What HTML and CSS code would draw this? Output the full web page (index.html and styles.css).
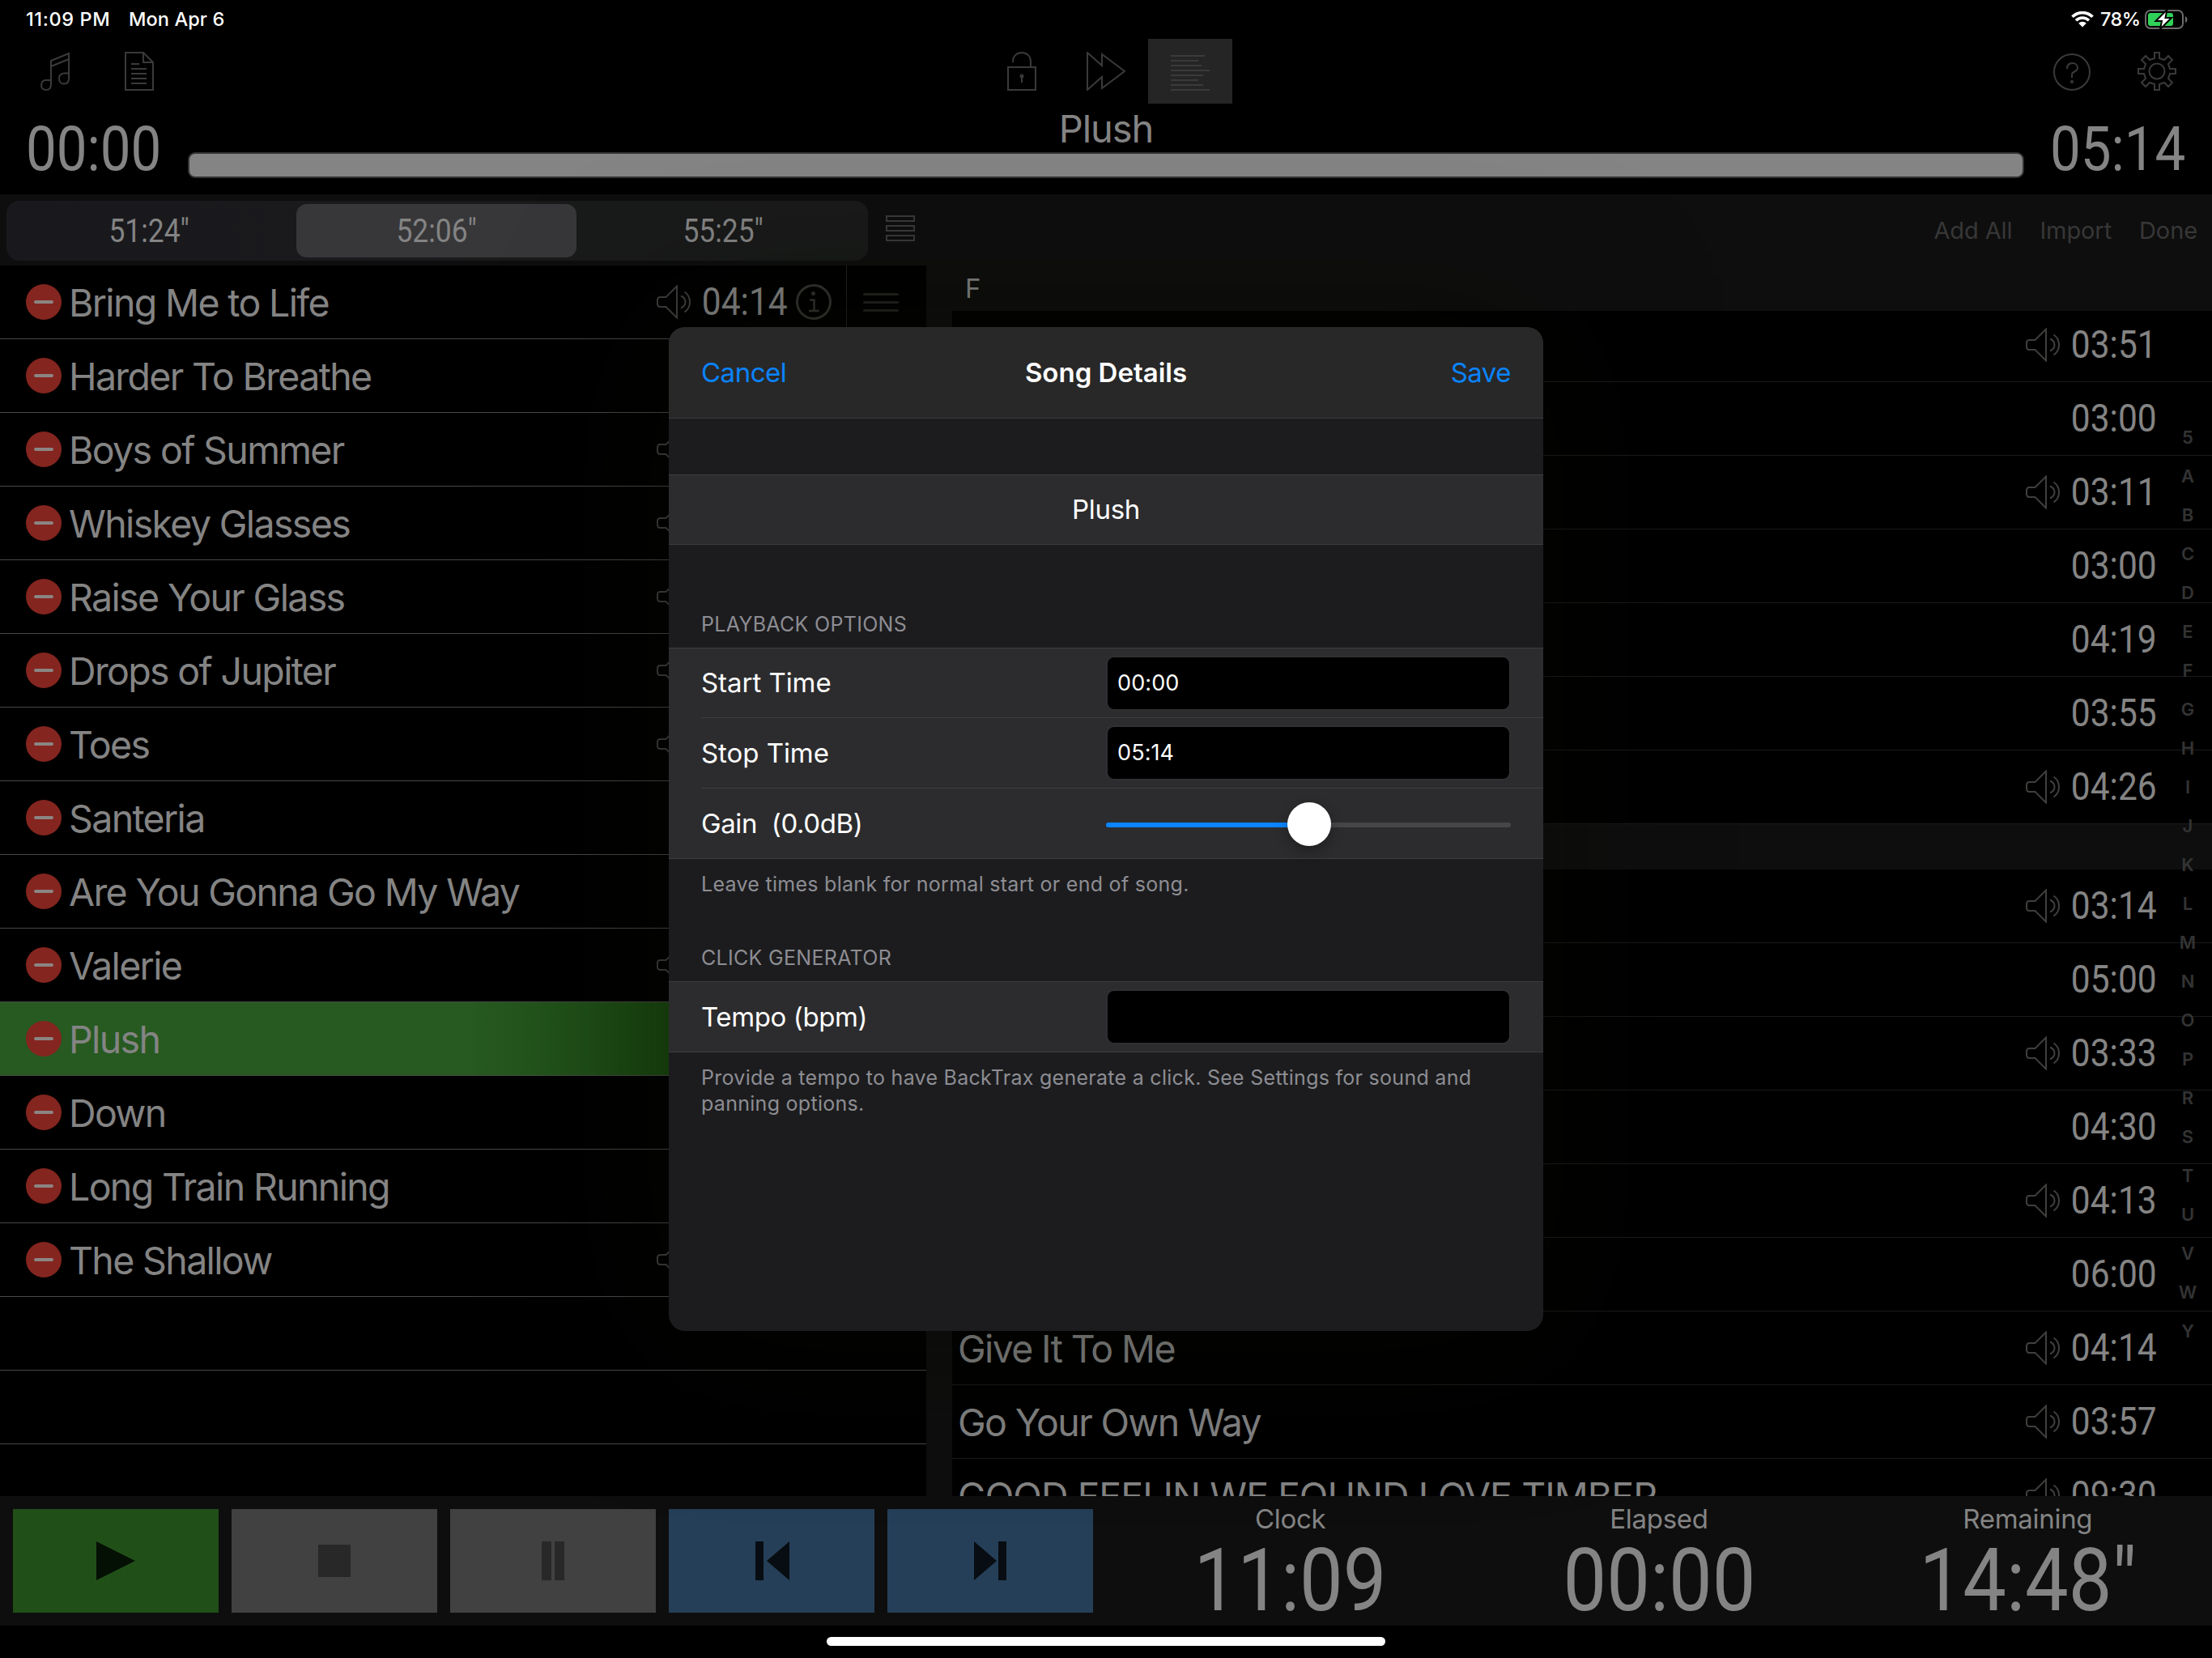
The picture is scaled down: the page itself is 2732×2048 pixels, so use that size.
FILE: index.html
```
<!DOCTYPE html>
<html lang="en">
<head>
    <meta charset="UTF-8">
    <meta name="viewport" content="width=device-width, initial-scale=1.0">
    <title>BackTrax</title>
    <link rel="stylesheet" href="styles.css">
</head>
<body>
    <svg class="symbols" width="0" height="0">
        <symbol id="speaker" viewBox="0 0 42 42">
            <path d="M25 1.5V40.5L11.5 27H4.5Q1 27 1 23V19Q1 15 4.5 15H11.5Z"/>
            <path d="M30 13.5Q35.5 16 35.5 21T30 28.500M34.500 8.500Q41 13 41 21T34.500 33.500"/>
        </symbol>
        <symbol id="info" viewBox="0 0 44 44">
            <circle cx="22" cy="22" r="20.500" stroke-width="3"/>
            <circle cx="21.500" cy="11.500" r="2.500" fill="currentColor" stroke="none"/>
            <path d="M17 19.500H22.500V33M16 33H28.500" stroke-width="2.500"/>
        </symbol>
    </svg>

    <div class="status-bar">
        <span class="clock-text">11:09 PM</span>
        <span class="date-text">Mon Apr 6</span>
        <div class="status-right">
            <svg class="wifi" width="28" height="20" viewBox="0 0 28 20">
                <path d="M1.500 6.800A17.600 17.600 0 0 1 26.500 6.800M6 11.300A11.400 11.400 0 0 1 22 11.300" fill="none" stroke="#fff" stroke-width="3.600"/>
                <path d="M9.200 14.800A6.800 6.800 0 0 1 18.800 14.800L14 19.600Z" fill="#fff"/>
            </svg>
            <span class="percent">78%</span>
            <svg width="54" height="28" viewBox="0 0 54 28">
                <rect x="1" y="3" width="46" height="22" rx="6" fill="none" stroke="#6a6a6a" stroke-width="2"/>
                <path d="M50 10Q52.500 11 52.500 14T50 18Z" fill="#6a6a6a"/>
                <rect x="4" y="6" width="31" height="16" rx="3" fill="#30d158"/>
                <path d="M27.500 2L13.500 16H21L19 26L33 12H25.500Z" fill="#fff" stroke="#000" stroke-width="2"/>
            </svg>
        </div>
    </div>

    <div class="toolbar">
        <div class="tool-group">
            <div class="tool"><svg viewBox="0 0 48 48"><path d="M19 41V11L41 2V33M19 18L41 9M19 35H13C8.500 35 7 38 7 41.500S9 47 13 47S19 45 19 40ZM41 26.500H36C31 26.500 29 29.500 29 33S31 39.500 35 39.500S41 37 41 33Z"/></svg></div>
            <div class="tool"><svg viewBox="0 0 48 48"><path d="M7 1H29L41 13V47H7ZM29 1V13H41M14 15H24M14 21H33M14 27H33M14 33H33M14 39H33"/></svg></div>
        </div>
        <div class="tool-group">
            <div class="tool"><svg viewBox="0 0 48 48"><path d="M7 19H41V47H7ZM13 13V12C13 5 18 1 24 1S35 5 35 12V19M24 30V38"/><circle cx="24" cy="30" r="1.500"/></svg></div>
            <div class="tool"><svg viewBox="0 0 48 48"><path d="M1 1L19 17V3L47 24L19 45V31L1 47Z"/></svg></div>
            <div class="tool active"><svg viewBox="0 0 48 48"><path d="M0 5H42M0 11H34M0 17H38M0 23H48M0 29H40M0 35H34M0 41H40M0 47H48"/></svg></div>
        </div>
        <div class="tool-group">
            <div class="tool"><svg viewBox="0 0 48 48"><circle cx="23" cy="25" r="22"/><path d="M17 21C17 16 19 14 23.500 14S30 17 30 20C30 25 23 24 23 28V32"/><circle cx="23" cy="37" r="1"/></svg></div>
            <div class="tool"><svg viewBox="0 0 48 48"><circle cx="24" cy="24" r="9.500"/><path d="M21 1H27V8L33 10L38 5L43 10L38 15L40 21H47V27H40L38 33L43 38L38 43L33 38L27 40V47H21V40L15 38L10 43L5 38L10 33L8 27H1V21H8L10 15L5 10L10 5L15 10L21 8Z"/></svg></div>
        </div>
    </div>

    <div class="player">
        <div class="player-time"><span class="condensed">00:00</span></div>
        <div class="player-center">
            <div class="player-title">Plush</div>
            <div class="progress"></div>
        </div>
        <div class="player-time"><span class="condensed">05:14</span></div>
    </div>

    <div class="options-bar">
        <div class="segments">
            <div class="segment"><span class="condensed">51:24"</span></div>
            <div class="segment selected"><span class="condensed">52:06"</span></div>
            <div class="segment"><span class="condensed">55:25"</span></div>
        </div>
        <div class="rows-icon"><i></i><i></i><i></i></div>
        <div class="options-links">
            <span>Add All</span>
            <span>Import</span>
            <span>Done</span>
        </div>
    </div>

    <div class="lists">
        <div class="set-list" id="set-list"></div>
        <div class="library">
            <div class="section-title">F</div>
            <div class="library-scroll"><div class="library-rows" id="library"></div></div>
            <div class="index" id="index"></div>
        </div>
    </div>

    <div class="transport">
        <div class="button play"><svg viewBox="0 0 48 48"><path d="M0 0L48 24L0 48Z"/></svg></div>
        <div class="button"><svg viewBox="0 0 48 48"><path d="M4 4H44V44H4Z"/></svg></div>
        <div class="button"><svg viewBox="0 0 48 48"><path d="M10 0H22V48H10ZM26 0H38V48H26Z"/></svg></div>
        <div class="button skip"><svg viewBox="0 0 48 48"><path d="M4 0H14V48H4ZM46 0V48L18 24Z"/></svg></div>
        <div class="button skip"><svg viewBox="0 0 48 48"><path d="M34 0H44V48H34ZM4 0V48L32 24Z"/></svg></div>
        <div class="readouts">
            <div class="readout"><label>Clock</label><span class="condensed">11:09</span></div>
            <div class="readout"><label>Elapsed</label><span class="condensed">00:00</span></div>
            <div class="readout"><label>Remaining</label><span class="condensed">14:48"</span></div>
        </div>
    </div>
    <div class="home"></div>

    <div class="modal">
        <div class="modal-header">
            <span class="link">Cancel</span>
            <span class="modal-title">Song Details</span>
            <span class="link save">Save</span>
        </div>
        <div class="group name-group">
            <div class="name">Plush</div>
        </div>
        <div class="group-title">PLAYBACK OPTIONS</div>
        <div class="group">
            <div class="field"><span>Start Time</span><div class="input">00:00</div></div>
            <div class="field"><span>Stop Time</span><div class="input">05:14</div></div>
            <div class="field">
                <span class="gain">Gain&nbsp; (0.0dB)</span>
                <div class="slider"><div class="slider-fill"></div><div class="knob"></div></div>
            </div>
        </div>
        <div class="note">Leave times blank for normal start or end of song.</div>
        <div class="group-title click-title">CLICK GENERATOR</div>
        <div class="group">
            <div class="field"><span class="gain">Tempo (bpm)</span><div class="input"></div></div>
        </div>
        <div class="note">Provide a tempo to have BackTrax generate a click. See Settings for sound and panning options.</div>
    </div>

    <script>
        // [name, has audio]
        const songs = [
            ['Bring Me to Life', true], ['Harder To Breathe', false], ['Boys of Summer', true],
            ['Whiskey Glasses', true], ['Raise Your Glass', true], ['Drops of Jupiter', true],
            ['Toes', true], ['Santeria', false], ['Are You Gonna Go My Way', false],
            ['Valerie', true], ['Plush', false], ['Down', false],
            ['Long Train Running', false], ['The Shallow', true]
        ];
        // [name, time, has audio], null starts a new section
        const library = [
            ['', '03:51', true], ['', '03:00', false], ['', '03:11', true], ['', '03:00', false],
            ['', '04:19', false], ['', '03:55', false], ['', '04:26', true],
            null,
            ['', '03:14', true], ['', '05:00', false], ['', '03:33', true], ['', '04:30', false],
            ['', '04:13', true], ['', '06:00', false], ['Give It To Me', '04:14', true],
            ['Go Your Own Way', '03:57', true], ['GOOD FEELIN WE FOUND LOVE TIMBER', '09:30', true]
        ];
        const speaker = '<svg class="speaker"><use href="#speaker"/></svg>';

        let html = '';
        songs.forEach(([name, audio], i) => {
            html += `<div class="row ${name === 'Plush' ? 'current' : ''}">
                <span class="remove"></span><span class="song">${name}</span>
                ${audio ? speaker : ''}
                ${i === 0 ? `<span class="time"><span class="condensed">04:14</span></span>
                <svg class="info"><use href="#info"/></svg>
                <span class="handle"><i></i><i></i><i></i></span>` : '<span class="row-space"></span>'}
            </div>`;
        });
        for (let i = 0; i < 3; i++) html += '<div class="row"></div>';
        document.getElementById('set-list').innerHTML = html;

        document.getElementById('library').innerHTML = library.map(item => {
            if (!item) return '<div class="section-bar"></div>';
            const [name, time, audio] = item;
            const caps = name && name === name.toUpperCase() ? 'caps' : '';
            return `<div class="row"><span class="song ${caps}">${name}</span>${audio ? speaker : ''}
                <span class="time"><span class="condensed">${time}</span></span></div>`;
        }).join('');

        document.getElementById('index').innerHTML =
            [...'5ABCDEFGHIJKLMNOPRSTUVWY'].map(c => `<span>${c}</span>`).join('');
    </script>
</body>
</html>
```
FILE: styles.css
```
* {
    box-sizing: border-box;
}
body {
    margin: 0;
    width: 2732px;
    height: 2048px;
    overflow: hidden;
    position: relative;
    background-color: #000;
    color: #848484;
    font-family: Inter, "Liberation Sans", sans-serif;
}
.symbols {
    position: absolute;
}
.condensed {
    display: inline-block;
    font-family: Roboto, sans-serif;
    transform: scaleX(0.885);
    white-space: nowrap;
}
.status-bar {
    height: 48px;
    padding: 0 29px 0 32px;
    display: flex;
    align-items: center;
    color: #fff;
    font-size: 23.5px;
    font-weight: 500;
    line-height: 48px;
}
.clock-text {
    width: 127px;
    letter-spacing: 0.6px;
}
.date-text {
    letter-spacing: 0.1px;
}
.status-right {
    margin-left: auto;
    display: flex;
    align-items: center;
}
.percent {
    width: 48px;
    margin: 0 7px 0 8px;
    letter-spacing: -0.6px;
}

/* toolbar */
.toolbar {
    height: 80px;
    padding: 0 16px;
    display: flex;
    justify-content: space-between;
    position: relative;
}
.tool-group {
    display: flex;
    width: 312px;
}
.tool-group:last-child {
    justify-content: flex-end;
}
.tool {
    width: 104px;
    height: 80px;
    padding: 16px 28px;
}
.tool.active {
    background-color: #252525;
}
.tool svg {
    display: block;
    width: 48px;
    height: 48px;
    fill: none;
    stroke: #3a3a3a;
    stroke-width: 2;
}

/* player */
.player {
    height: 112px;
    display: flex;
    justify-content: space-between;
}
.player-time {
    width: 232px;
    height: 112px;
    padding-top: 11px;
    text-align: center;
    font-size: 76px;
    line-height: 87px;
}
.player-center {
    width: 2268px;
}
.player-title {
    height: 60px;
    line-height: 62px;
    text-align: center;
    font-size: 47px;
    letter-spacing: -1.1px;
}
.progress {
    height: 32px;
    background-color: #848484;
    border: 2px solid #333;
    border-radius: 9px;
}

/* options bar */
.options-bar {
    height: 88px;
    padding: 8px 18px 6px 8px;
    display: flex;
    background-color: #0e0e0e;
}
.segments {
    width: 1064px;
    height: 74px;
    padding: 4px 0;
    display: flex;
    border-radius: 16px;
    background: linear-gradient(90deg, #19191d, #1a1a1d 40%, #191a1a 60%, #191a19);
}
.segment {
    flex: 1;
    margin: 0 5px 0 3px;
    border-radius: 13px;
    text-align: center;
    font-size: 40px;
    line-height: 66px;
}
.segment.selected {
    background-color: #373739;
}
.rows-icon {
    width: 36px;
    margin: 18px 0 0 22px;
}
.rows-icon i {
    display: block;
    height: 8px;
    margin-bottom: 4px;
    border: 2px solid #3a3a3a;
}
.options-links {
    margin-left: auto;
    display: flex;
    gap: 34px;
    font-size: 29px;
    line-height: 74px;
    letter-spacing: -0.1px;
    color: #373737;
}

/* lists */
.lists {
    height: 1520px;
    display: flex;
    overflow: hidden;
    background-color: #0e0e0e;
}
.set-list {
    width: 1144px;
    background-color: #000;
}
.row {
    height: 91px;
    display: flex;
    align-items: center;
    border-bottom: 1px solid #484848;
}
.set-list .row {
    padding-left: 32px;
}
.row.current {
    background: linear-gradient(90deg, #275a21 580px, #19470f 830px);
}
.remove {
    width: 44px;
    height: 44px;
    padding: 20px 10px;
    border-radius: 50%;
    background-color: #84251f;
}
.remove::after {
    content: "";
    display: block;
    height: 4px;
    border-radius: 2px;
    background-color: #8c8583;
}
.song {
    flex: 1;
    margin-left: 9px;
    padding-top: 2px;
    font-size: 46.5px;
    line-height: 60px;
    letter-spacing: -1.65px;
    white-space: nowrap;
}
.song.caps {
    letter-spacing: -0.95px;
}
.speaker {
    width: 42px;
    height: 42px;
    fill: none;
    stroke: #3f3f3d;
    stroke-width: 2;
}
.time {
    width: 130px;
    padding-left: 4px;
    text-align: center;
    font-size: 48px;
    line-height: 60px;
    margin-bottom: 2px;
}
.info {
    width: 44px;
    height: 44px;
    margin-right: 18px;
    fill: none;
    stroke: #33332f;
    color: #33332f;
}
.handle {
    width: 99px;
    height: 90px;
    padding: 34px 34px 0 20px;
    border-left: 1px solid #22221e;
}
.handle i {
    display: block;
    height: 3px;
    margin-bottom: 7px;
    border-radius: 2px;
    background-color: #22221f;
}
.row-space {
    width: 291px;
}
.library {
    flex: 1;
    margin-left: 32px;
    position: relative;
}
.section-title {
    height: 56px;
    padding-left: 16px;
    font-size: 33px;
    line-height: 56px;
}
.library-scroll {
    height: 1464px;
    overflow: hidden;
    background-color: #000;
}
.library-rows {
    margin-top: -3px;
}
.library .row {
    padding-right: 58px;
    border-color: #1a1a1a;
}
.library .song {
    margin-left: 7px;
}
.section-bar {
    height: 56px;
    background-color: #0e0e0e;
}
/* letter index lies over the rows */
.index {
    position: absolute;
    top: 188px;
    right: 10px;
    width: 40px;
    text-align: center;
    font-size: 22px;
    font-weight: 600;
    line-height: 48px;
    color: #333;
}
.index span {
    display: block;
}

/* transport */
.transport {
    height: 160px;
    padding: 16px 0 16px 16px;
    display: flex;
    gap: 16px;
    background-color: #0e0e0e;
}
.button {
    width: 254px;
    height: 128px;
    padding: 40px 103px;
    background-color: #414141;
    fill: #282828;
}
.button.play {
    background-color: #205018;
    fill: #051004;
}
.button.skip {
    background-color: #263f58;
    fill: #070d12;
}
.button svg {
    display: block;
    width: 48px;
    height: 48px;
}
.readouts {
    flex: 1;
    display: flex;
}
.readout {
    flex: 1;
    display: flex;
    flex-direction: column;
    align-items: center;
}
.readout label {
    height: 26px;
    font-size: 33px;
    line-height: 25px;
    letter-spacing: -0.3px;
}
.readout .condensed {
    font-size: 108px;
    line-height: 126px;
}
.home {
    width: 690px;
    height: 11px;
    margin: 14px auto 0;
    border-radius: 6px;
    background-color: #fff;
}

/* song details sheet */
.modal {
    position: absolute;
    top: 404px;
    left: 826px;
    width: 1080px;
    height: 1240px;
    border-radius: 20px;
    overflow: hidden;
    background-color: #1c1c1e;
    color: #fff;
    font-size: 33px;
    letter-spacing: -0.3px;
    box-shadow: 0 0 200px rgba(10, 14, 4, 0.5);
}
.modal-header {
    height: 113px;
    padding: 0 40px;
    display: flex;
    line-height: 112px;
    background-color: #282828;
    border-bottom: 1px solid #3d3d40;
}
.link {
    width: 250px;
    color: #0a84ff;
    letter-spacing: -0.5px;
}
.save {
    text-align: right;
}
.modal-title {
    flex: 1;
    text-align: center;
    font-weight: 600;
    letter-spacing: 0;
}
.group {
    background-color: #2c2c2e;
    border-top: 1px solid #3d3d40;
    border-bottom: 1px solid #3d3d40;
}
.name-group {
    margin-top: 69px;
}
.name {
    height: 85px;
    line-height: 85px;
    text-align: center;
}
.group-title {
    margin-top: 82px;
    padding-left: 40px;
    height: 45px;
    font-size: 25px;
    line-height: 32px;
    letter-spacing: 0.3px;
    color: #8d8d93;
}
.field {
    height: 87px;
    margin-left: 40px;
    padding-right: 40px;
    display: flex;
    align-items: center;
    justify-content: space-between;
    letter-spacing: -0.05px;
    border-bottom: 1px solid #3d3d40;
}
.field:first-child {
    height: 86px;
}
.field > span {
    margin-bottom: 1px;
}
.field:last-child {
    height: 86px;
    border-bottom: 0;
}
.field .gain {
    letter-spacing: -0.4px;
}
.input {
    width: 500px;
    height: 68px;
    padding-left: 12px;
    border: 2px solid #303032;
    border-radius: 10px;
    background-color: #000;
    font-size: 27px;
    line-height: 64px;
    letter-spacing: 0.1px;
}
.slider {
    width: 500px;
    height: 6px;
    margin-top: 4px;
    border-radius: 3px;
    background-color: #464648;
    position: relative;
}
.slider-fill {
    width: 250px;
    height: 6px;
    border-radius: 3px;
    background-color: #0a84ff;
}
.knob {
    position: absolute;
    top: -25px;
    left: 224px;
    width: 54px;
    height: 54px;
    border-radius: 50%;
    background-color: #fff;
    box-shadow: 0 6px 16px rgba(0, 0, 0, 0.3);
}
.note {
    padding: 15px 40px 0;
    font-size: 25px;
    line-height: 32px;
    letter-spacing: 0.28px;
    color: #8d8d93;
}
.click-title {
    margin-top: 59px;
}
```
